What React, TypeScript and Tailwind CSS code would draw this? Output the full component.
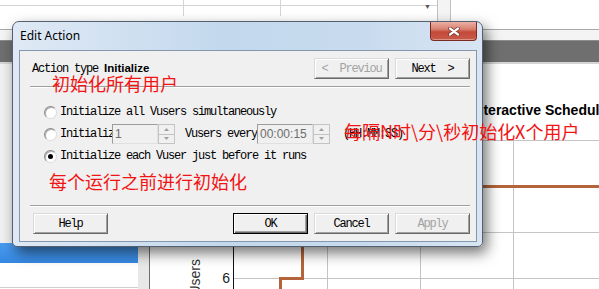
import React from "react";

const MONO = "font-['Liberation_Mono',monospace] text-[12px] tracking-[-1.2px]";
const SANS = "font-['Liberation_Sans',Arial,sans-serif]";
const CJK = "font-['Noto_Sans_CJK_SC',sans-serif]";

function Btn({ label, disabled, isDefault }: { label: string; disabled?: boolean; isDefault?: boolean }) {
  const frame = isDefault
    ? " border border-black shadow-[inset_1px_1px_0_#ffffff,inset_-1px_-1px_0_#696969,inset_-2px_-2px_0_#a0a0a0]"
    : " border border-t-[#dadada] border-l-[#dadada] border-r-[#6a6a6a] border-b-[#6a6a6a] shadow-[inset_1px_1px_0_#ffffff,inset_-1px_-1px_0_#a0a0a0]";
  return (
    <div
      className={
        "flex h-[21px] w-[75px] shrink-0 items-center justify-center whitespace-pre bg-[#f0f0f0] " +
        MONO +
        frame +
        (disabled ? " text-[#a3a3a3]" : " text-black")
      }
    >
      {label}
    </div>
  );
}

function Radio({ checked }: { checked?: boolean }) {
  return (
    <div className="flex h-[13px] w-[13px] shrink-0 items-center justify-center rounded-full border border-[#8a8a8a] border-b-[#dcdcdc] border-r-[#dcdcdc] bg-white shadow-[inset_1px_1px_0_#b0b0b0]">
      {checked && <div className="h-[5px] w-[5px] rounded-full bg-black" />}
    </div>
  );
}

function Tri({ up }: { up?: boolean }) {
  return (
    <svg width="5" height="3" viewBox="0 0 5 3" className="block">
      <polygon points={up ? "0,3 5,3 2.5,0" : "0,0 5,0 2.5,3"} fill="#a0a0a0" />
    </svg>
  );
}

function Spin() {
  return (
    <div className="flex h-[20px] w-[17px] shrink-0 flex-col border border-[#c4c4c4] bg-[#f0f0f0]">
      <div className="flex flex-1 items-center justify-center border-b border-[#c4c4c4]">
        <Tri up />
      </div>
      <div className="flex flex-1 items-center justify-center">
        <Tri />
      </div>
    </div>
  );
}

function Field({ w, value }: { w: string; value: string }) {
  return (
    <div
      className={
        "flex h-[20px] shrink-0 items-center border border-[#9c9c9c] border-b-[#e0e0e0] border-r-[#e0e0e0] bg-[#f0f0f0] pl-[2px] text-[12px] tracking-normal text-[#6d6d6d] " +
        SANS +
        " " +
        w
      }
    >
      {value}
    </div>
  );
}

function Sep() {
  return <div className="ml-[10px] mr-[6px] border-t border-b border-t-[#a0a0a0] border-b-white" />;
}

function Chart() {
  return (
    <svg width="449" height="149" className="block shrink-0">
      <line x1="83.5" y1="0" x2="83.5" y2="149" stroke="#111" />
      {[0.5, 46.5, 92.5, 138.5].map((y) => (
        <line key={y} x1="84" y1={y} x2="449" y2={y} stroke="#c4c4c4" />
      ))}
      {[177.5, 270.5, 363.5].map((x) => (
        <line key={x} x1={x} y1="0" x2={x} y2="149" stroke="#c4c4c4" />
      ))}
      <polyline
        points="449,46.5 152.5,46.5 152.5,138.5 130.5,138.5 130.5,160"
        fill="none"
        stroke="#b4643a"
        strokeWidth="3"
      />
      <text x="80" y="143" textAnchor="end" fontFamily="Liberation Sans, Arial, sans-serif" fontSize="14" fill="#222">
        6
      </text>
      <text
        transform="translate(50,119) rotate(-90)"
        textAnchor="end"
        fontFamily="Liberation Sans, Arial, sans-serif"
        fontSize="14"
        fill="#333"
      >
        Users
      </text>
    </svg>
  );
}

export default function App() {
  return (
    <div className="relative h-[289px] w-[599px] overflow-hidden bg-white">
      {/* background application */}
      <div className="flex h-full flex-col">
        <div className="flex h-[30px] shrink-0 border-b border-[#a8a8a8] bg-white">
          <div className="h-[16px] w-[184px] shrink-0 border-r border-[#d4d4d4]">
            <div className="h-[6px] border-b border-[#d4d4d4]" />
          </div>
          <div className="h-[16px] w-[97px] shrink-0 border-r border-[#d4d4d4]">
            <div className="h-[6px] border-b border-[#d4d4d4]" />
          </div>
          <div className="relative h-[16px] w-[156px] shrink-0">
            <div className="h-[6px] border-b border-[#d4d4d4]" />
            <div className="absolute right-[6px] top-[3px] text-[7px] leading-none text-[#555]">▼</div>
          </div>
          <div className="h-[30px] w-[14px] shrink-0 border-l border-r border-[#c0c0c0] bg-[#f4f4f4]" />
        </div>
        <div className="h-[10px] shrink-0 bg-[#f4f4f4]" />
        <div className="h-[22px] shrink-0 border-t border-[#8c8c8c] bg-[#6f6f6f]" />
        <div className="h-[2px] shrink-0 bg-[#d4d4d4]" />
        <div className="flex min-h-0 flex-1">
          <div className="flex w-[138px] shrink-0 flex-col">
            <div className="flex-1 bg-[#efefef]" />
            <div className="h-[20px] bg-[linear-gradient(#4a9bef,#3588e2)]" />
            <div className="h-[25px] border-b border-[#cfcfcf] bg-white" />
            <div className="h-[1px] bg-white" />
          </div>
          <div className="w-[12px] shrink-0 border-r border-[#6e6e6e] bg-[#e8e8e8]" />
          <div className="flex min-w-0 flex-1 flex-col bg-white">
            <div className={"h-[76px] shrink-0 overflow-hidden whitespace-nowrap pl-[321px] pt-[38px] text-[14px] font-bold leading-[16px] text-black " + SANS}>
              Interactive Schedule
            </div>
            <Chart />
          </div>
        </div>
      </div>

      {/* dialog window */}
      <div className="absolute left-[12px] top-[21px] flex h-[226px] w-[471px] flex-col rounded-b-[5px] rounded-t-[7px] border border-[#52606f] bg-[linear-gradient(90deg,#dfe9f5_0%,#c3d8ed_45%,#c8dbee_75%,#d8e5f3_100%)] pb-[4px] pl-[6px] pr-[5px] shadow-[4px_6px_14px_rgba(0,0,0,0.55)]">
        <div className="flex h-[28px] shrink-0">
          <span className="ml-[1px] self-center font-['Noto_Sans',sans-serif] text-[12px] leading-none text-black">Edit Action</span>
          <div className="ml-auto flex h-[19px] w-[47px] items-center justify-center self-start rounded-b-[4px] border border-t-0 border-[#7a2c22] bg-[linear-gradient(#ebb0a4_0%,#d98070_40%,#c44a3a_55%,#c95a48_100%)] shadow-[inset_0_-1px_0_rgba(255,255,255,0.35)]">
            <svg width="12" height="9" viewBox="0 0 12 9">
              <path d="M2 1.5 L10 7.5 M10 1.5 L2 7.5" stroke="#6b2a22" strokeWidth="3.6" strokeLinecap="round" />
              <path d="M2 1.5 L10 7.5 M10 1.5 L2 7.5" stroke="#ffffff" strokeWidth="2.2" strokeLinecap="round" />
            </svg>
          </div>
        </div>
        <div className="flex flex-1 flex-col border border-[#8497ad] bg-[#f0f0f0]">
          <div className="mt-[7px] flex h-[21px] shrink-0 items-center pr-[6px]">
            <span className={"ml-[12px] whitespace-pre text-black " + MONO}>Action type </span>
            <span className={"text-[11.5px] font-bold text-black " + SANS}>Initialize</span>
            <div className="ml-auto flex gap-[6px]">
              <Btn label="<  Previou" disabled />
              <Btn label="Next  >" />
            </div>
          </div>
          <div className="mt-[7px]">
            <Sep />
          </div>
          <div className={"mt-[13px] flex flex-col pl-[24px] text-black " + MONO}>
            <div className="flex h-[22px] items-center gap-[3px]">
              <Radio />
              <span className="whitespace-pre">Initialize all Vusers simultaneously</span>
            </div>
            <div className="flex h-[22px] items-center">
              <Radio />
              <span className="ml-[3px] w-[52px] overflow-hidden whitespace-pre">Initialize</span>
              <Field w="w-[46px]" value="1" />
              <Spin />
              <span className="ml-[10px] whitespace-pre">Vusers every</span>
              <Field w="w-[56px]" value="00:00:15" />
              <Spin />
              <span className="ml-[13px] whitespace-pre">(HH:MM:SS)</span>
            </div>
            <div className="flex h-[22px] items-center gap-[3px]">
              <Radio checked />
              <span className="whitespace-pre">Initialize each Vuser just before it runs</span>
            </div>
          </div>
          <div className="mt-[38px]">
            <Sep />
          </div>
          <div className="mt-[6px] flex items-center pl-[13px] pr-[6px]">
            <Btn label="Help" />
            <div className="ml-auto flex gap-[6px]">
              <Btn label="OK" isDefault />
              <Btn label="Cancel" />
              <Btn label="Apply" disabled />
            </div>
          </div>
        </div>
      </div>

      {/* red annotations */}
      <div className={"pointer-events-none absolute left-[52px] top-[74px] whitespace-nowrap text-[18px] leading-[18px] text-[#f21414] " + CJK}>
        初始化所有用户
      </div>
      <div className={"pointer-events-none absolute left-[344px] top-[122px] whitespace-nowrap text-[18px] leading-[18px] text-[#f21414] " + CJK}>
        每隔N时\分\秒初始化X个用户
      </div>
      <div className={"pointer-events-none absolute left-[49px] top-[172px] whitespace-nowrap text-[18px] leading-[18px] text-[#f21414] " + CJK}>
        每个运行之前进行初始化
      </div>
    </div>
  );
}
